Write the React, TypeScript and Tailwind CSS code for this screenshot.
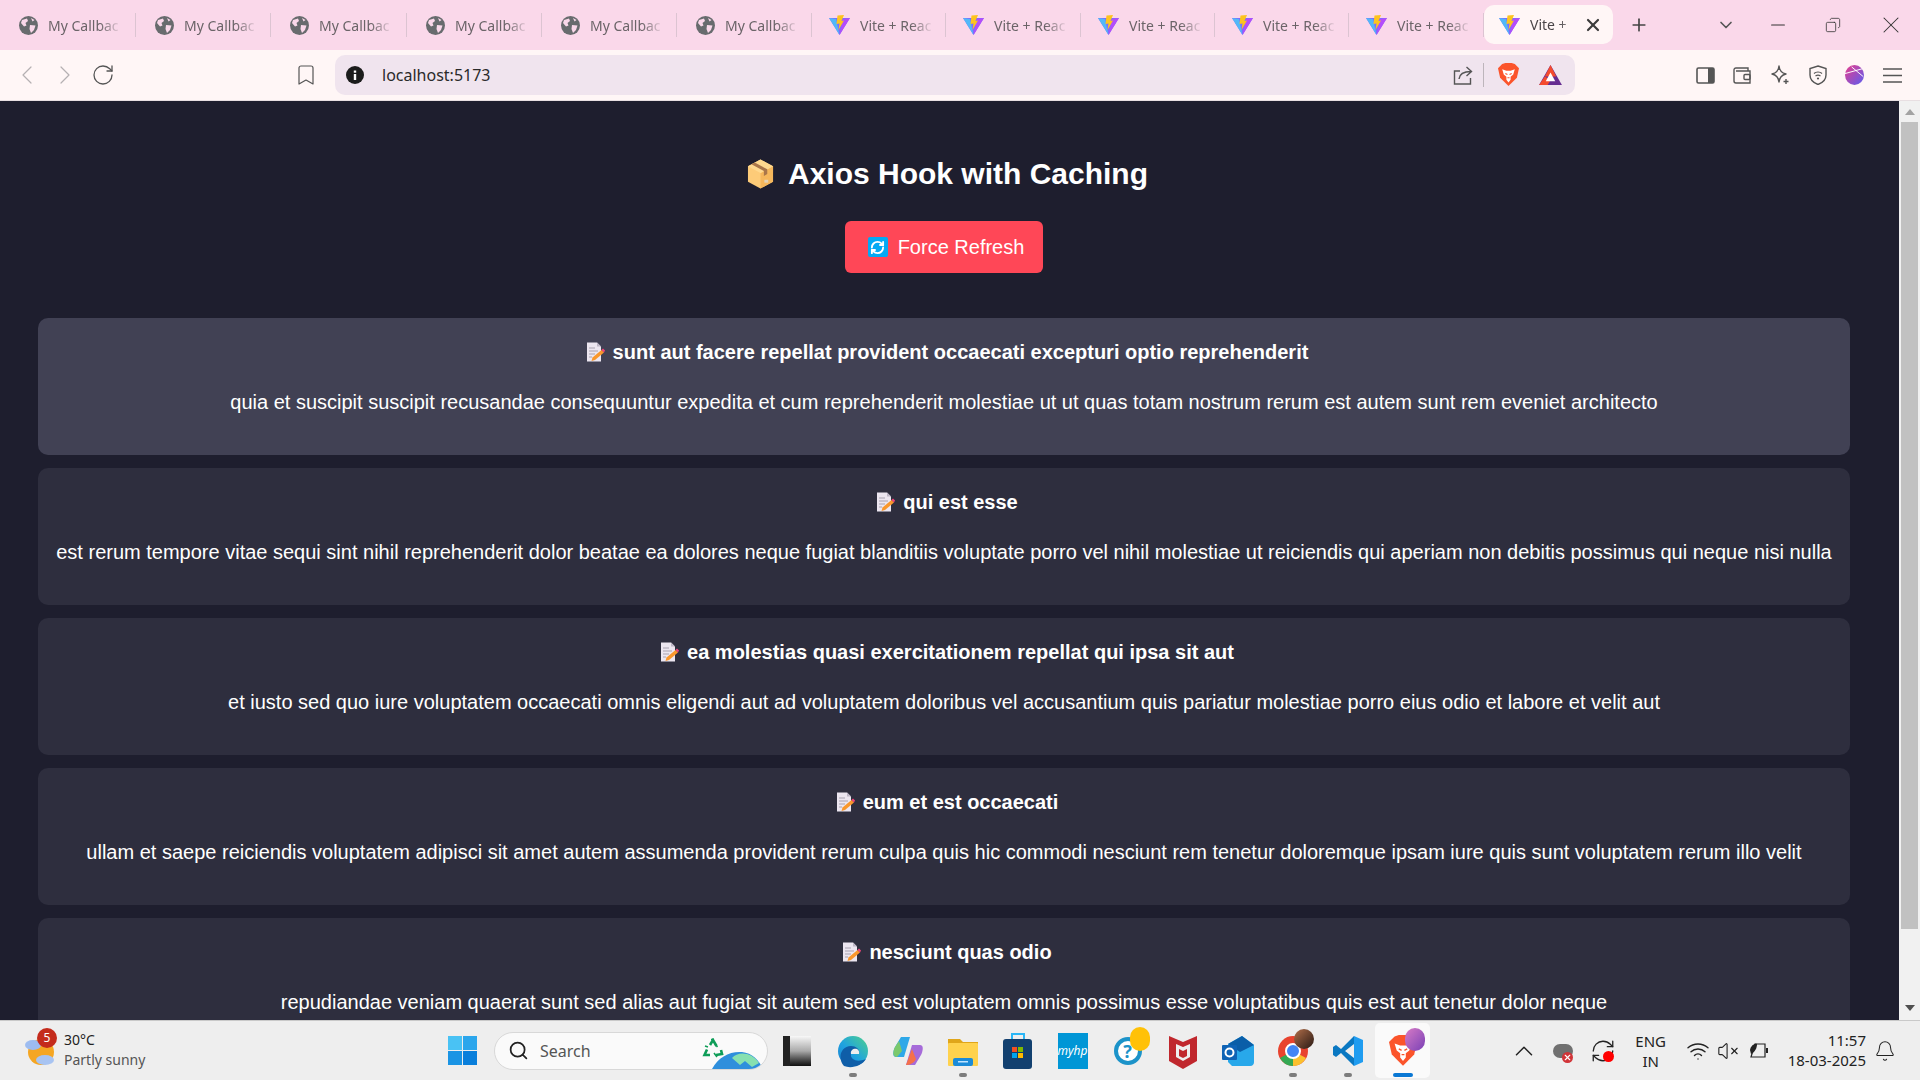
import { ChevronLeft, ChevronRight, RotateCw, Bookmark, X, Plus, ChevronDown, Minus, ChevronUp, Wifi, VolumeX, Bell, Search, RefreshCw, Copy } from 'lucide-react';

const posts = [
  { title: 'sunt aut facere repellat provident occaecati excepturi optio reprehenderit', body: 'quia et suscipit suscipit recusandae consequuntur expedita et cum reprehenderit molestiae ut ut quas totam nostrum rerum est autem sunt rem eveniet architecto' },
  { title: 'qui est esse', body: 'est rerum tempore vitae sequi sint nihil reprehenderit dolor beatae ea dolores neque fugiat blanditiis voluptate porro vel nihil molestiae ut reiciendis qui aperiam non debitis possimus qui neque nisi nulla' },
  { title: 'ea molestias quasi exercitationem repellat qui ipsa sit aut', body: 'et iusto sed quo iure voluptatem occaecati omnis eligendi aut ad voluptatem doloribus vel accusantium quis pariatur molestiae porro eius odio et labore et velit aut' },
  { title: 'eum et est occaecati', body: 'ullam et saepe reiciendis voluptatem adipisci sit amet autem assumenda provident rerum culpa quis hic commodi nesciunt rem tenetur doloremque ipsam iure quis sunt voluptatem rerum illo velit' },
  { title: 'nesciunt quas odio', body: 'repudiandae veniam quaerat sunt sed alias aut fugiat sit autem sed est voluptatem omnis possimus esse voluptatibus quis est aut tenetur dolor neque' },
];

function ViteIcon() {
  return (
    <svg width="21" height="20" viewBox="0 0 21 20" className="shrink-0">
      <path d="M0 3 L21 3 L10.5 20 Z" fill="#7c6cff" />
      <path d="M0 3 L7 4 L10.5 20 Z" fill="#52b8f8" />
      <path d="M21 3 L10.5 20 L14 4 Z" fill="#b44dfa" />
      <path d="M8.5 0.5 L15 0 L12.5 6 L15 5.5 L9.5 15 L10.5 8.5 L7.5 9 Z" fill="#fdc41e" />
    </svg>
  );
}

function GlobeIcon() {
  return (
    <svg width="19" height="19" viewBox="0 0 19 19" className="shrink-0">
      <circle cx="9.5" cy="9.5" r="9.5" fill="#686b6e" />
      <path d="M3 4 L8 2.5 L9 5 L6.5 7 L7.5 9.5 L5 10.5 L2 7 Z" fill="#fad8ea" />
      <path d="M11 9 L16.5 9.5 L15 14 L12 17 L10.5 13 Z" fill="#fad8ea" />
      <path d="M12 2 L15.5 4 L13.5 5.5 Z" fill="#fad8ea" />
    </svg>
  );
}

function Tab({ vite, width }: { vite?: boolean; width: number }) {
  return (
    <div className={`flex items-center h-[50px] shrink-0 ${vite ? 'pl-[17px]' : 'pl-[19px]'}`} style={{ width }}>
      {vite ? <ViteIcon /> : <GlobeIcon />}
      <div className="ml-[10px] w-[74px] whitespace-nowrap text-[14px] text-[#6b6468] [mask-image:linear-gradient(to_right,black_70%,transparent)]">
        {vite ? 'Vite + Reac' : 'My Callbac'}
      </div>
      <div className="ml-auto w-px h-[24px] bg-[#dcc4d2]" />
    </div>
  );
}

function Package() {
  return (
    <svg width="27" height="30" viewBox="0 0 28 30" className="shrink-0">
      <path d="M14 0 L27 7 V23 L14 30 L1 23 V7 Z" fill="#fdcb78" />
      <path d="M14 14 L27 7 V23 L14 30 Z" fill="#f5b75c" />
      <path d="M14 0 L27 7 L14 14 L1 7 Z" fill="#ffd98f" />
      <path d="M8 3.2 L21 10.2 V15 L17.5 17 V12 L4.6 5 Z" fill="#a9764a" />
      <rect x="18" y="21" width="4" height="3" fill="#dedede" opacity="0.7" />
    </svg>
  );
}

function RefreshEmoji() {
  return (
    <div className="w-[20px] h-[20px] rounded-[2px] bg-[#03a9f4] flex items-center justify-center shrink-0">
      <RefreshCw size={15} stroke="#ffffff" strokeWidth={3} />
    </div>
  );
}

function NoteEmoji() {
  return (
    <svg width="20" height="20" viewBox="0 0 20 20" className="shrink-0">
      <path d="M2 0.5 H12 L16 4.5 V19.5 H2 Z" fill="#ece6f0" />
      <path d="M12 0.5 L16 4.5 H12 Z" fill="#bdb6c6" />
      <path d="M4 6 H10 M4 9 H13 M4 12 H10 M4 15 H7" stroke="#a8a2b0" strokeWidth="1.1" />
      <path d="M16.5 8 L19 10.5 L10 18 L6.5 19 L7.5 15.5 Z" fill="#f9972c" />
      <path d="M16.5 8 L18 6.5 L20 8.5 L19 10.5 Z" fill="#f4467c" />
    </svg>
  );
}

function Card({ title, body, hover }: { title: string; body: string; hover?: boolean }) {
  return (
    <div className={`${hover ? 'bg-[#414154]' : 'bg-[#2e2e3e]'} rounded-[10px] h-[137px] px-[18px] pt-[19px] text-center shrink-0`}>
      <h3 className="flex items-center justify-center gap-[8px] pl-[5px] text-[20px] leading-[30px] font-bold text-white">
        <NoteEmoji />
        <span>{title}</span>
      </h3>
      <p className="mt-[20px] text-[20px] leading-[30px] text-white whitespace-nowrap">{body}</p>
    </div>
  );
}

function Scrollbar() {
  return (
    <div className="w-[21px] shrink-0 bg-[#f1f1f1] flex flex-col items-center">
      <div className="h-[21px] shrink-0 flex items-center justify-center">
        <div className="w-0 h-0 border-x-[5px] border-x-transparent border-b-[6px] border-b-[#a3a3a3]" />
      </div>
      <div className="w-[17px] h-[807px] shrink-0 bg-[#c1c1c1]" />
      <div className="mt-auto h-[24px] flex items-center justify-center">
        <div className="w-0 h-0 border-x-[5px] border-x-transparent border-t-[6px] border-t-[#505050]" />
      </div>
    </div>
  );
}

function TaskIcon({ children, dot, active }: { children: React.ReactNode; dot?: boolean; active?: boolean }) {
  return (
    <div className={`w-[55px] h-[55px] shrink-0 flex items-center justify-center relative rounded-[5px] ${active ? 'bg-[#fafafa]' : ''}`}>
      {children}
      {dot && <div className="absolute bottom-[1px] w-[8px] h-[4px] rounded-full bg-[#7c7c7c]" />}
      {active && <div className="absolute bottom-[1px] w-[20px] h-[4px] rounded-full bg-[#0a78d4]" />}
    </div>
  );
}

function BraveLion({ size }: { size: number }) {
  return (
    <svg width={size} height={size * 1.1} viewBox="0 0 20 22">
      <path d="M4 1 L7 0 H13 L16 1 L20 5 L18 14 L10 22 L2 14 L0 5 Z" fill="#fb542b" />
      <path d="M4 6 L8 7.5 H12 L16 6 L14.5 11 L12 13 V16 L10 18.5 L8 16 V13 L5.5 11 Z" fill="#ffffff" />
      <path d="M7 10 L9 11 M13 10 L11 11 M9 14 H11" stroke="#fb542b" strokeWidth="1" />
    </svg>
  );
}

export default function App() {
  return (
    <div className="w-[1920px] h-[1080px] overflow-hidden flex flex-col font-['Liberation_Sans',Arial,sans-serif] bg-[#1e1e2e]">
      {/* tab strip */}
      <div className="h-[50px] bg-[#fad8ea] flex items-center shrink-0 font-['Noto_Sans',sans-serif]">
        {[136, 135, 136, 135, 135, 135].map((w, i) => <Tab key={i} width={w} />)}
        {[134, 135, 134, 134, 135].map((w, i) => <Tab key={i} vite width={w} />)}
        <div className="w-[129px] h-[39px] mb-[1px] rounded-[10px] bg-[#fff6f6] flex items-center pl-[15px] shrink-0">
          <ViteIcon />
          <span className="ml-[10px] w-[44px] whitespace-nowrap text-[14px] text-[#4a4548] [mask-image:linear-gradient(to_right,black_65%,#0006)]">Vite +</span>
          <X size={20} strokeWidth={2.6} className="ml-auto mr-[10px] text-[#3c3c3c]" />
        </div>
        <Plus size={20} className="ml-[16px] text-[#444444]" />
        <ChevronDown size={20} className="ml-[67px] text-[#555555]" />
        <Minus size={22} strokeWidth={1.1} className="ml-[31px] text-[#333333]" />
        <Copy size={16} strokeWidth={1.2} className="ml-[36px] text-[#333333] -scale-x-100" />
        <X size={28} strokeWidth={0.9} className="ml-[36px] text-[#333333]" />
      </div>
      {/* toolbar */}
      <div className="h-[51px] bg-[#fff6f6] border-b border-[#e8dfe2] flex items-center shrink-0">
        <ChevronLeft size={32} strokeWidth={0.9} className="ml-[11px] text-[#b5b0b2]" />
        <ChevronRight size={32} strokeWidth={0.9} className="ml-[6px] text-[#b5b0b2]" />
        <RotateCw size={24} strokeWidth={1.3} className="ml-[10px] text-[#555555]" />
        <Bookmark size={24} strokeWidth={1.2} className="ml-[179px] text-[#555555]" />
        <div className="ml-[17px] w-[1240px] h-[40px] rounded-[10px] bg-[#f0e4ee] flex items-center pl-[11px]">
          <svg width="18" height="18" viewBox="0 0 18 18" className="shrink-0">
            <circle cx="9" cy="9" r="9" fill="#1c1c1c" />
            <rect x="7.8" y="8" width="2.4" height="6" fill="#ffffff" />
            <rect x="7.8" y="4.5" width="2.4" height="2.2" fill="#ffffff" />
          </svg>
          <span className="ml-[18px] text-[16px] text-[#2a2a2a] font-['Noto_Sans',sans-serif]">localhost:5173</span>
          <svg width="20" height="19" viewBox="0 0 20 19" fill="none" stroke="#555555" strokeWidth="1.4" className="ml-auto">
            <path d="M7 5 H1.5 V18 H17.5 V12" />
            <path d="M6 13 C6.5 8 10 5.5 18 5.5 M13.5 1 L18.5 5.5 L13.5 10" />
          </svg>
          <div className="ml-[10px] w-px h-[24px] bg-[#bdb5bb]" />
          <div className="ml-[14px] flex"><BraveLion size={21} /></div>
          <svg width="23" height="20" viewBox="0 0 24 21" className="ml-[20px] mr-[13px]">
            <path d="M12 0 L24 21 H0 Z" fill="#662d91" />
            <path d="M12 0 L18 12 H6 Z M6 12 L0 21 H9 L12 16 Z" fill="#f44b2e" />
            <path d="M12 8 L17 17 H7 Z" fill="#ffffff" />
          </svg>
        </div>
        <svg width="19" height="17" viewBox="0 0 19 17" className="ml-[121px]">
          <rect x="1" y="1" width="17" height="15" rx="1.5" fill="none" stroke="#555555" strokeWidth="1.6" />
          <rect x="12" y="1" width="6" height="15" fill="#555555" />
        </svg>
        <svg width="18" height="17" viewBox="0 0 18 17" fill="none" stroke="#555555" strokeWidth="1.4" className="ml-[18px]">
          <path d="M15 4 V1 H3 C1.5 1 1 2 1 3 V14 C1 15.5 2 16 3 16 H17 V4 H3" />
          <rect x="11" y="7.5" width="6" height="5" rx="1" />
        </svg>
        <svg width="19" height="20" viewBox="0 0 19 20" fill="none" className="ml-[20px]">
          <path d="M8 1 C8.5 6 10.5 8 15 9 C10.5 10 8.5 12 8 17 C7.5 12 5.5 10 1 9 C5.5 8 7.5 6 8 1 Z" stroke="#555555" strokeWidth="1.4" strokeLinejoin="round" />
          <path d="M15 14 V19 M12.5 16.5 H17.5" stroke="#555555" strokeWidth="1.4" />
        </svg>
        <svg width="18" height="20" viewBox="0 0 18 20" fill="none" className="ml-[19px]">
          <path d="M9 1 L17 3.5 V10 C17 15 13 18 9 19.5 C5 18 1 15 1 10 V3.5 Z" stroke="#555555" strokeWidth="1.4" />
          <path d="M5 8.5 C7 6.5 11 6.5 13 8.5 M6.5 11 C8 10 10 10 11.5 11" stroke="#555555" strokeWidth="1.2" />
          <circle cx="9" cy="13.5" r="1.1" fill="#555555" />
        </svg>
        <svg width="19" height="20" viewBox="0 0 20 21" className="ml-[18px]">
          <defs>
            <linearGradient id="p" x1="0" y1="0" x2="1" y2="1">
              <stop offset="0" stopColor="#e83e8c" />
              <stop offset="1" stopColor="#5b5cf0" />
            </linearGradient>
          </defs>
          <ellipse cx="10" cy="10.5" rx="10" ry="10.5" fill="url(#p)" />
          <path d="M0 9 L18 4 M7 2 L19 12" stroke="#ffffff" strokeWidth="1" fill="none" />
        </svg>
        <svg width="19" height="15" viewBox="0 0 19 15" fill="none" stroke="#555555" strokeWidth="1.5" className="ml-[19px]">
          <path d="M0 1 H19 M0 7.5 H19 M0 14 H19" />
        </svg>
      </div>
      {/* page */}
      <div className="flex-1 min-h-0 flex overflow-hidden">
        <div className="flex-1 min-w-0 overflow-hidden pl-[38px] pr-[49px] pt-[50px]">
          <h1 className="flex items-center justify-center gap-[14px] pl-[7px] text-[30px] leading-[46px] font-bold text-white">
            <Package />
            <span>Axios Hook with Caching</span>
          </h1>
          <div className="flex justify-center mt-[24px]">
            <button className="w-[198px] h-[52px] pl-[4px] rounded-[6px] bg-[#ff4757] text-white text-[20px] flex items-center justify-center gap-[10px]">
              <RefreshEmoji />
              <span>Force Refresh</span>
            </button>
          </div>
          <div className="mt-[45px] flex flex-col gap-[13px]">
            {posts.map((p, i) => <Card key={i} title={p.title} body={p.body} hover={i === 0} />)}
          </div>
        </div>
        <Scrollbar />
      </div>
      {/* taskbar */}
      <div className="h-[60px] bg-[#eeeeee] border-t border-[#c9c9c9] flex items-center shrink-0 font-['Noto_Sans',sans-serif]">
        <div className="w-[448px] shrink-0 flex items-center pl-[25px]">
          <div className="relative w-[34px] h-[34px] shrink-0">
            <svg width="32" height="34" viewBox="0 0 32 34">
              <circle cx="16" cy="18" r="13" fill="#f5a623" />
              <ellipse cx="8" cy="11" rx="8" ry="5" fill="#9dbcf0" />
              <ellipse cx="20" cy="26" rx="9" ry="5" fill="#a8c4f2" />
            </svg>
            <div className="absolute left-[12px] top-[-6px] w-[20px] h-[20px] rounded-full bg-[#c42b1c] text-white text-[12px] flex items-center justify-center">5</div>
          </div>
          <div className="ml-[5px] mb-[2px] text-[14px] leading-[20px] text-[#222222]">
            <div>30°C</div>
            <div className="text-[#555555]">Partly sunny</div>
          </div>
        </div>
        <svg width="29" height="29" viewBox="0 0 29 29" className="shrink-0">
          <rect x="0" y="0" width="14" height="14" fill="#49c2f4" />
          <rect x="15" y="0" width="14" height="14" fill="#2ba6ec" />
          <rect x="0" y="15" width="14" height="14" fill="#1a94e4" />
          <rect x="15" y="15" width="14" height="14" fill="#0a7fdb" />
        </svg>
        <div className="ml-[17px] w-[274px] h-[38px] rounded-full bg-[#fafafa] border border-[#d8d8d8] flex items-center pl-[13px] shrink-0 relative overflow-hidden">
          <Search size={21} strokeWidth={2} className="text-[#222222]" />
          <span className="ml-[11px] text-[16px] text-[#555555]">Search</span>
          <svg width="22" height="21" viewBox="0 0 22 21" fill="none" stroke="#0f9d58" strokeWidth="2.6" className="absolute left-[207px] top-[5px]">
            <path d="M8 7 L11 2 L14.5 8 M19 12 L20 16 L14 17 M8 17 H2.5 L5 11.5" />
            <path d="M12 1.5 L9 1.5 M15.5 9 L13 6 M12 15 L15 19 M6 9 L3 8" strokeWidth="1.5" />
          </svg>
          <svg width="51" height="18" viewBox="0 0 51 18" className="absolute left-[217px] bottom-0">
            <path d="M0 18 C6 6 18 0 30 1 C40 2 47 9 51 18 Z" fill="#2f8fdc" />
            <path d="M20 7 C26 0 40 1 47 12 L40 16 L33 10 L28 14 Z" fill="#86e0b0" />
          </svg>
        </div>
        <div className="w-[28px] h-[30px] ml-[15px] shrink-0 bg-gradient-to-b from-[#f8f8f8] via-[#aaaaaa] to-[#111111] border-l-[7px] border-[#222222]" />
        <div className="ml-[14px] flex items-center">
          <TaskIcon dot>
            <svg width="32" height="34" viewBox="0 0 32 34">
              <defs>
                <linearGradient id="e" x1="1" y1="0" x2="0" y2="1">
                  <stop offset="0" stopColor="#4fd18b" />
                  <stop offset="0.55" stopColor="#1fa3e0" />
                  <stop offset="1" stopColor="#1a7fd0" />
                </linearGradient>
              </defs>
              <circle cx="16" cy="17" r="15" fill="url(#e)" />
              <path d="M7 32 C0 24 4 12 14 12 C20 12 23 16 22 20 L14 20 C13 25 19 29 29 25 C25 32 14 35 7 32 Z" fill="#0f5ea8" />
              <path d="M14 20 C13 16 17 14 20 15 C22 16 22.5 18 22 20 Z" fill="#eeeeee" />
            </svg>
          </TaskIcon>
          <TaskIcon>
            <svg width="32" height="32" viewBox="0 0 32 32">
              <path d="M9 2 H18 L12 22 H4 C0 22 1 16 3 12 Z" fill="#2ea8e8" />
              <path d="M7 6 L10 16 L5 22 C0 22 1 16 3 12 Z" fill="#7bc86c" />
              <path d="M23 30 H14 L20 10 H28 C32 10 31 16 29 20 Z" fill="#a66bd9" />
              <path d="M14 30 L20 14 L24 24 C22 28 18 30 14 30 Z" fill="#f5704a" />
            </svg>
          </TaskIcon>
          <TaskIcon dot>
            <svg width="30" height="30" viewBox="0 0 30 30">
              <path d="M0 3 H12 L15 6 H30 V28 H0 Z" fill="#e0a61a" />
              <rect x="0" y="7" width="30" height="23" rx="1" fill="#ffd24d" />
              <rect x="5" y="22" width="20" height="8" rx="2" fill="#1b8bd8" />
              <rect x="10" y="25" width="10" height="1.5" fill="#bfe4ff" />
            </svg>
          </TaskIcon>
          <TaskIcon>
            <svg width="30" height="36" viewBox="0 0 30 36">
              <path d="M9 6 V1 H21 V6" fill="none" stroke="#29b6f6" strokeWidth="2" />
              <rect x="0" y="6" width="29" height="30" rx="3" fill="#12406f" />
              <rect x="9" y="14" width="5" height="5" fill="#f25022" />
              <rect x="15" y="14" width="5" height="5" fill="#7fba00" />
              <rect x="9" y="20" width="5" height="5" fill="#00a4ef" />
              <rect x="15" y="20" width="5" height="5" fill="#ffb900" />
            </svg>
          </TaskIcon>
          <TaskIcon>
            <div className="w-[30px] h-[36px] bg-[#0096d6] flex items-center justify-center text-white text-[12px] italic">myhp</div>
          </TaskIcon>
          <TaskIcon>
            <div className="relative w-[28px] h-[34px] flex items-center justify-center">
              <div className="w-[28px] h-[28px] rounded-full border-[4px] border-[#1c93c9] bg-white text-[#1c93c9] font-bold text-[18px] leading-none flex items-center justify-center">?</div>
              <div className="absolute right-[-8px] top-[-7px] w-[20px] h-[24px] rounded-full bg-[#ffc107]" />
            </div>
          </TaskIcon>
          <TaskIcon>
            <svg width="28" height="36" viewBox="0 0 28 36">
              <path d="M0 3 L14 9 L28 3 V28 L14 36 L0 28 Z" fill="#c0272d" />
              <path d="M7 11 L14 14 L21 11 V24 L14 28 L7 24 Z" fill="#eeeeee" />
              <path d="M10 16 L14 18 L18 16 V23 L14 25 L10 23 Z" fill="#c0272d" />
            </svg>
          </TaskIcon>
          <TaskIcon>
            <svg width="32" height="30" viewBox="0 0 32 30">
              <path d="M6 8 L20 0 L32 9 V26 C32 28 31 30 28 30 H10 L6 26 Z" fill="#28a8ea" />
              <path d="M20 0 L32 9 L18 16 L6 8 Z" fill="#0a5ea8" />
              <rect x="0" y="9" width="15" height="15" rx="1" fill="#0f63b5" />
              <circle cx="7.5" cy="16.5" r="4" fill="none" stroke="#ffffff" strokeWidth="2" />
            </svg>
          </TaskIcon>
          <TaskIcon dot>
            <div className="relative w-[30px] h-[34px] flex items-center justify-center">
              <svg width="30" height="30" viewBox="0 0 30 30">
                <circle cx="15" cy="15" r="15" fill="#e8432e" />
                <path d="M15 15 L2 22 A15 15 0 0 0 15 30 Z" fill="#34a853" />
                <path d="M15 15 L28 22 A15 15 0 0 1 15 30 Z" fill="#fbc02d" />
                <circle cx="15" cy="15" r="7" fill="#4285f4" stroke="#ffffff" strokeWidth="2" />
              </svg>
              <div className="absolute right-[-6px] top-[-5px] w-[20px] h-[20px] rounded-full bg-gradient-to-br from-[#b5704a] to-[#2a1a14]" />
            </div>
          </TaskIcon>
          <TaskIcon dot>
            <svg width="30" height="30" viewBox="0 0 30 30">
              <path d="M21 0 L30 4 V26 L21 30 Z" fill="#1f9cf0" />
              <path d="M21 0 L8 13 L3 9 L0 11 V19 L3 21 L8 17 L21 30 V22 L12 15 L21 8 Z" fill="#0a78c2" />
            </svg>
          </TaskIcon>
          <TaskIcon active>
            <div className="relative flex">
              <BraveLion size={28} />
              <div className="absolute right-[-8px] top-[-7px] w-[20px] h-[23px] rounded-full bg-gradient-to-br from-[#d97ac5] to-[#7b3fb5]" />
            </div>
          </TaskIcon>
        </div>
        <div className="ml-auto flex items-center text-[#222222] text-[15px]">
          <ChevronUp size={30} strokeWidth={1.2} />
          <div className="relative ml-[14px] w-[20px] h-[14px] rounded-full bg-[#707070]">
            <div className="absolute right-[0px] bottom-[-5px] w-[11px] h-[11px] rounded-full bg-[#d13438] flex items-center justify-center">
              <X size={9} stroke="#ffffff" strokeWidth={3} />
            </div>
          </div>
          <div className="relative ml-[17px] flex">
            <RefreshCw size={26} strokeWidth={1.2} />
            <div className="absolute right-[2px] bottom-[2px] w-[11px] h-[11px] rounded-full bg-[#ff0000]" />
          </div>
          <div className="ml-[18px] w-[34px] text-center leading-[20px]">
            <div>ENG</div>
            <div>IN</div>
          </div>
          <Wifi size={24} strokeWidth={1.4} className="ml-[18px]" />
          <VolumeX size={22} strokeWidth={1.2} className="ml-[7px]" />
          <svg width="21" height="18" viewBox="0 0 21 18" fill="none" className="ml-[9px]">
            <path d="M3 15 L7 2 H17 V15 Z" stroke="#222222" strokeWidth="1.2" />
            <path d="M2 8 C3 3 7 1 9 2 C9 6 7 10 3 12 Z" fill="#222222" />
            <rect x="18" y="6" width="2" height="5" fill="#222222" />
          </svg>
          <div className="ml-[19px] mb-[1px] text-right leading-[20px] whitespace-nowrap">
            <div>11:57</div>
            <div>18-03-2025</div>
          </div>
          <Bell size={22} strokeWidth={1.1} className="ml-[8px] mr-[24px]" />
        </div>
      </div>
    </div>
  );
}
